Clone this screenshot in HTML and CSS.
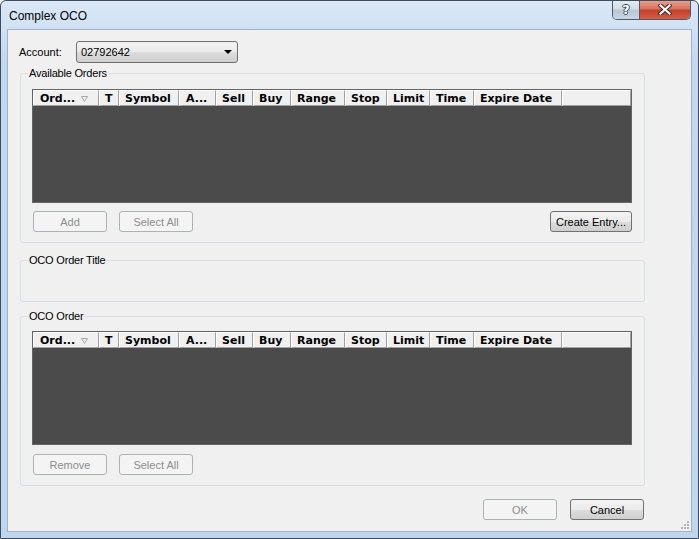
FILE: index.html
```html
<!DOCTYPE html>
<html>
<head>
<meta charset="utf-8">
<title>Complex OCO</title>
<link rel="stylesheet" href="styles.css">
</head>
<body>
<div class="window">
  <div class="titlebar">
    <span class="title">Complex OCO</span>
    <div class="caption-btns">
      <div class="cbtn help">?</div>
      <div class="cbtn close">
        <svg width="14" height="11" viewBox="0 0 14 11">
          <path d="M2.5 1.5 L11.5 9.5 M11.5 1.5 L2.5 9.5" stroke="#3b2a28" stroke-width="4.2" stroke-linecap="square"/>
          <path d="M2.5 1.5 L11.5 9.5 M11.5 1.5 L2.5 9.5" stroke="#ffffff" stroke-width="2.2" stroke-linecap="square"/>
        </svg>
      </div>
    </div>
  </div>
  <div class="client">
    <div class="account-row">
      <span class="lbl">Account:</span>
      <div class="combo">
        <span class="combo-text">02792642</span>
        <span class="combo-arrow"></span>
      </div>
    </div>

    <fieldset class="group g-orders">
      <legend>Available Orders</legend>
      <div class="grid">
        <div class="grid-head">
          <div class="hc c-ord">Ord...<svg class="sort" width="7" height="6" viewBox="0 0 7 6"><path d="M0.5 0.5 H6.5 L3.5 5.5 Z" fill="none" stroke="#a8a8a8" stroke-width="1"/></svg></div>
          <div class="hc c-t">T</div>
          <div class="hc c-sym">Symbol</div>
          <div class="hc c-a">A...</div>
          <div class="hc c-sell">Sell</div>
          <div class="hc c-buy">Buy</div>
          <div class="hc c-range">Range</div>
          <div class="hc c-stop">Stop</div>
          <div class="hc c-limit">Limit</div>
          <div class="hc c-time">Time</div>
          <div class="hc c-exp">Expire Date</div>
          <div class="hc c-fill"></div>
        </div>
        <div class="grid-body"></div>
      </div>
      <div class="btn-row">
        <button class="btn disabled">Add</button>
        <button class="btn disabled">Select All</button>
        <button class="btn create">Create Entry...</button>
      </div>
    </fieldset>

    <fieldset class="group g-title">
      <legend>OCO Order Title</legend>
      <div class="title-space"></div>
    </fieldset>

    <fieldset class="group g-oco">
      <legend>OCO Order</legend>
      <div class="grid">
        <div class="grid-head">
          <div class="hc c-ord">Ord...<svg class="sort" width="7" height="6" viewBox="0 0 7 6"><path d="M0.5 0.5 H6.5 L3.5 5.5 Z" fill="none" stroke="#a8a8a8" stroke-width="1"/></svg></div>
          <div class="hc c-t">T</div>
          <div class="hc c-sym">Symbol</div>
          <div class="hc c-a">A...</div>
          <div class="hc c-sell">Sell</div>
          <div class="hc c-buy">Buy</div>
          <div class="hc c-range">Range</div>
          <div class="hc c-stop">Stop</div>
          <div class="hc c-limit">Limit</div>
          <div class="hc c-time">Time</div>
          <div class="hc c-exp">Expire Date</div>
          <div class="hc c-fill"></div>
        </div>
        <div class="grid-body"></div>
      </div>
      <div class="btn-row">
        <button class="btn disabled">Remove</button>
        <button class="btn disabled">Select All</button>
      </div>
    </fieldset>

    <div class="footer">
      <button class="btn disabled">OK</button>
      <button class="btn">Cancel</button>
    </div>

    <svg class="grip" width="10" height="10" viewBox="0 0 10 10">
      <g fill="#b4b4b4">
        <rect x="7" y="1" width="2" height="2"/>
        <rect x="4" y="4" width="2" height="2"/><rect x="7" y="4" width="2" height="2"/>
        <rect x="1" y="7" width="2" height="2"/><rect x="4" y="7" width="2" height="2"/><rect x="7" y="7" width="2" height="2"/>
      </g>
    </svg>
  </div>
</div>
</body>
</html>
```
FILE: styles.css
```css
* { box-sizing: border-box; }
html, body { margin: 0; padding: 0; }
body {
  width: 699px;
  height: 539px;
  overflow: hidden;
  background: #ffffff;
  font-family: "Liberation Sans", Arial, sans-serif;
  font-size: 11px;
  color: #000;
}
.window {
  width: 699px;
  height: 539px;
  border: 1px solid #3f4b5b;
  border-radius: 6px 6px 0 0;
  background: linear-gradient(to bottom, #dbe8f7 0px, #cfe1f4 28px, #c2d8f0 60px, #bfd6ef 100%);
  display: flex;
  flex-direction: column;
  padding: 0 6px 6px 6px;
  overflow: hidden;
}
.titlebar {
  height: 28px;
  flex: none;
  display: flex;
  justify-content: space-between;
  align-items: flex-start;
}
.title {
  font-size: 12px;
  margin-top: 8px;
  margin-left: 2px;
  color: #000;
}
.caption-btns {
  display: flex;
  margin-top: -1px;
  margin-right: 1px;
  border: 1px solid #4c5a6c;
  border-top: none;
  border-radius: 0 0 5px 5px;
  overflow: hidden;
  height: 20px;
}
.cbtn {
  height: 19px;
  display: flex;
  align-items: center;
  justify-content: center;
}
.help {
  width: 27px;
  border-right: 1px solid #4c5a6c;
  background: linear-gradient(to bottom, #e6edf5 0%, #d3dde8 45%, #b8c6d6 55%, #c9d5e2 100%);
  color: #fff;
  font-family: "DejaVu Sans", sans-serif;
  font-weight: bold;
  font-size: 13px;
  text-shadow: 1px 0 0 #3d4a5a, -1px 0 0 #3d4a5a, 0 1px 0 #3d4a5a, 0 -1px 0 #3d4a5a;
}
.close {
  width: 50px;
  background: linear-gradient(to bottom, #e9a595 0%, #d9735f 45%, #c4402c 55%, #d25c44 100%);
}
.client {
  flex: 1;
  position: relative;
  background: #f0f0f0;
  border: 1px solid #9fb2c7;
  padding: 11px 46px 0 12px;
  display: flex;
  flex-direction: column;
}
.account-row {
  display: flex;
  align-items: center;
  height: 22px;
}
.lbl {
  width: 56px;
  margin-left: -1px;
  margin-right: 1px;
}
.combo {
  width: 162px;
  height: 22px;
  border: 1px solid #707070;
  border-radius: 3px;
  background: linear-gradient(to bottom, #f2f2f2 0%, #ebebeb 50%, #dddddd 51%, #cfcfcf 100%);
  display: flex;
  align-items: center;
  justify-content: space-between;
  padding: 0 5px 0 4px;
}
.combo-arrow {
  width: 0;
  height: 0;
  border-left: 4px solid transparent;
  border-right: 4px solid transparent;
  border-top: 4px solid #000;
}
.group {
  margin: 0;
  border: 1px solid #d5dfe5;
  border-radius: 3px;
  padding: 0 12px 10px 11px;
  width: 625px;
  min-width: 0;
}
.group legend {
  padding: 0 1px;
  margin-left: -4px;
  line-height: 13px;
  height: 13px;
  letter-spacing: -0.2px;
}
.g-orders { margin-top: 4px; padding-top: 9px; }
.g-title { margin-top: 11px; padding-bottom: 0; }
.title-space { height: 34px; }
.g-oco { margin-top: 8px; padding-top: 8px; }
.grid {
  width: 600px;
  height: 114px;
  border: 1px solid #646464;
  display: flex;
  flex-direction: column;
  background: #4b4b4b;
}
.grid-head {
  height: 16px;
  display: flex;
  flex: none;
  background: #f0f0f0;
}
.hc {
  height: 16px;
  border-top: 1px solid #ffffff;
  border-left: 1px solid #ffffff;
  border-right: 1px solid #a0a0a0;
  border-bottom: 1px solid #a0a0a0;
  font-family: "DejaVu Sans", Verdana, sans-serif;
  font-weight: bold;
  font-size: 11px;
  line-height: 14px;
  padding-left: 5px;
  padding-top: 1px;
  white-space: nowrap;
  overflow: hidden;
  display: flex;
  align-items: center;
  flex: none;
}
.sort { margin-left: 6px; margin-top: 1px; }
.c-ord { width: 66px; padding-left: 6px; }
.c-t { width: 20px; }
.c-sym { width: 60px; }
.c-a { width: 37px; padding-left: 6px; }
.c-sell { width: 37px; }
.c-buy { width: 38px; }
.c-range { width: 54px; }
.c-stop { width: 42px; }
.c-limit { width: 43px; }
.c-time { width: 44px; }
.c-exp { width: 88px; }
.c-fill { flex: 1; }
.grid-body { flex: 1; background: #4b4b4b; }
.btn-row {
  display: flex;
  gap: 12px;
  margin-top: 8px;
  padding-left: 1px;
}
.g-oco .btn-row { margin-top: 9px; }
.btn {
  width: 74px;
  height: 21px;
  border: 1px solid #707070;
  border-radius: 3px;
  background: linear-gradient(to bottom, #f2f2f2 0%, #ebebeb 50%, #dddddd 51%, #cfcfcf 100%);
  font-family: "Liberation Sans", Arial, sans-serif;
  font-size: 11px;
  color: #000;
  padding: 0;
  margin: 0;
  text-align: center;
}
.btn.disabled {
  border-color: #adb2b5;
  background: #f4f4f4;
  color: #8d8d8d;
}
.btn.create {
  width: 82px;
  margin-left: auto;
  margin-right: 0;
}
.footer {
  display: flex;
  justify-content: flex-end;
  gap: 13px;
  margin-top: 13px;
  padding-right: 1px;
}
.grip {
  position: absolute;
  right: 1px;
  bottom: 1px;
}
```
